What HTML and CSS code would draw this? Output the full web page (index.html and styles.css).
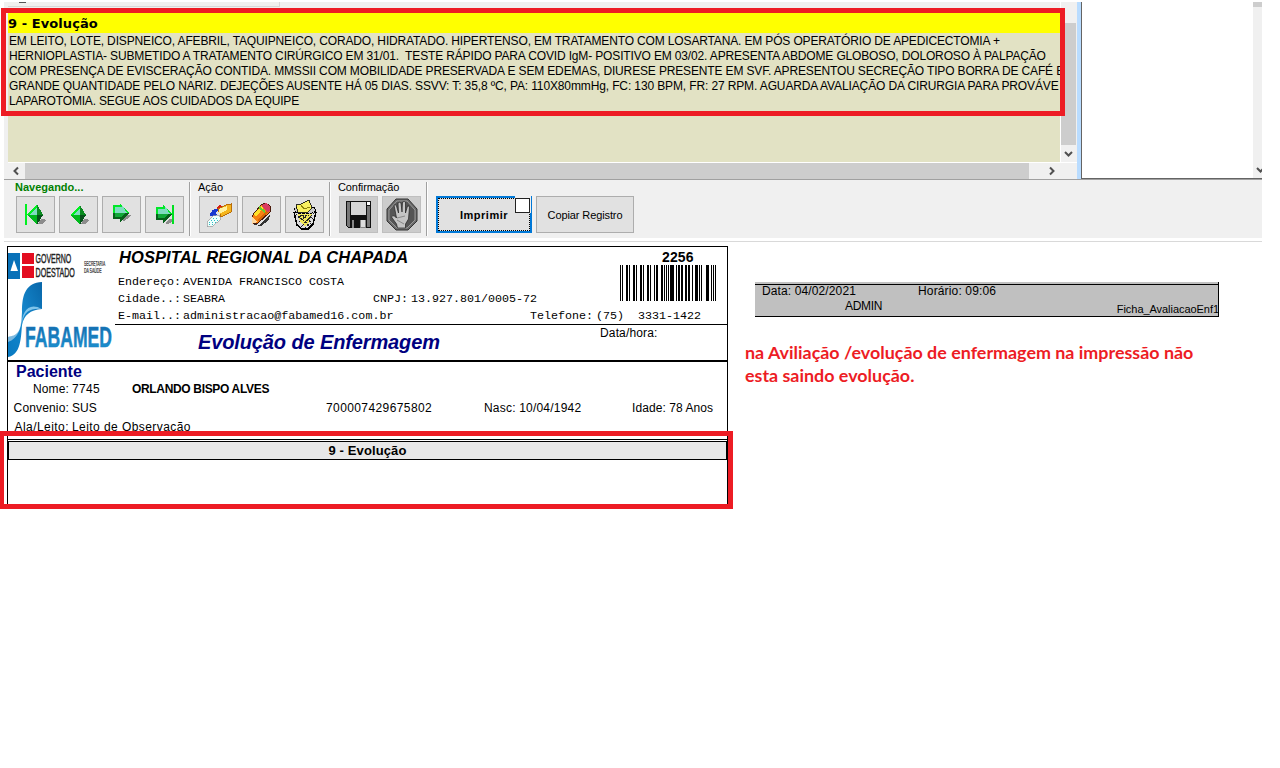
FILE: index.html
```html
<!DOCTYPE html>
<html lang="pt-BR">
<head>
<meta charset="utf-8">
<title>Evolução de Enfermagem</title>
<link rel="stylesheet" href="styles.css">
</head>
<body>
<div class="app">
  <div class="top">
    <div class="pane">
      <div class="view">
        <div class="content">
          <div class="strip"><i></i></div>
          <h1 class="heading">9 - Evolução</h1>
          <div class="note">
            <p class="n1">EM LEITO, LOTE, DISPNEICO, AFEBRIL, TAQUIPNEICO, CORADO, HIDRATADO. HIPERTENSO, EM TRATAMENTO COM LOSARTANA. EM PÓS OPERATÓRIO DE APEDICECTOMIA +</p>
            <p class="n2">HERNIOPLASTIA- SUBMETIDO A TRATAMENTO CIRÚRGICO EM 31/01.&nbsp; TESTE RÁPIDO PARA COVID IgM- POSITIVO EM 03/02. APRESENTA ABDOME GLOBOSO, DOLOROSO À PALPAÇÃO</p>
            <p class="n3">COM PRESENÇA DE EVISCERAÇÃO CONTIDA. MMSSII COM MOBILIDADE PRESERVADA E SEM EDEMAS, DIURESE PRESENTE EM SVF. APRESENTOU SECREÇÃO TIPO BORRA DE CAFÉ E</p>
            <p class="n4">GRANDE QUANTIDADE PELO NARIZ. DEJEÇÕES AUSENTE HÁ 05 DIAS. SSVV: T: 35,8 ºC, PA: 110X80mmHg, FC: 130 BPM, FR: 27 RPM. AGUARDA AVALIAÇÃO DA CIRURGIA PARA PROVÁVE</p>
            <p class="n5">LAPAROTOMIA. SEGUE AOS CUIDADOS DA EQUIPE</p>
          </div>
        </div>
        <div class="vscroll"><div class="vthumb"></div><svg width="15" height="17"><path d="M4 7l3.500 3.500L11 7" class="chev"/></svg></div>
      </div>
      <div class="hscroll"><svg width="17" height="16"><path d="M10 4.500L6.500 8L10 11.500" class="chev"/></svg><div class="hthumb"></div><svg class="hright" width="17" height="16"><path d="M5 4.500L8.500 8L5 11.500" class="chev"/></svg></div>
    </div>
    <div class="side"><div class="sidescroll"><i></i><svg width="9" height="17"><path d="M4 7l3.500 3.500L11 7" class="chev"/></svg></div></div>
  </div>

  <div class="toolbar">
    <section class="group nav">
      <span class="label navlabel">Navegando...</span>
      <div class="buttons">
        <button class="btn"><svg viewBox="0 0 39 38"><path d="M22 28l3-5h4l1 2-4 3z" fill="#8c8c8c"/><path d="M9 8h2v21H9z" fill="#00f020"/><path d="M11 19L21 8v11z" fill="#00f020"/><path d="M14 19L21 11v8z" fill="#7fdcc0"/><path d="M21 8l6 11h-6z" fill="#0a8a20"/><path d="M11 19h10v10z" fill="#00b81c"/><path d="M21 19h6l-6 10z" fill="#06521a"/></svg></button>
        <button class="btn"><svg viewBox="0 0 39 38"><path d="M22 28l3-5h4l1 2-4 3z" fill="#8c8c8c"/><path d="M11 19L21 9v10z" fill="#00f020"/><path d="M14 19L21 12v7z" fill="#7fdcc0"/><path d="M21 9l6 10h-6z" fill="#0a8a20"/><path d="M11 19h10v10z" fill="#00b81c"/><path d="M21 19h6l-6 10z" fill="#06521a"/></svg></button>
        <button class="btn"><svg viewBox="0 0 39 38"><path d="M20 24l5-5h5l-5 4-3 2z" fill="#8c8c8c"/><path d="M11 9h7V7l9 10H11z" fill="#00e828"/><path d="M13 11h7v-2l5 8H13z" fill="#7fdcc0"/><path d="M11 17h16l-9 9v-3h-7z" fill="#06601a"/><path d="M13 17h10l-4 4h-6z" fill="#10a838"/></svg></button>
        <button class="btn"><svg viewBox="0 0 39 38"><path d="M20 27l5-4h5l-5 4-3 1z" fill="#8c8c8c"/><path d="M11 11h7V8l9 10H11z" fill="#00e828"/><path d="M13 13h7v-3l5 8H13z" fill="#7fdcc0"/><path d="M11 18h16l-9 10v-4h-7z" fill="#06601a"/><path d="M13 18h10l-4 4h-6z" fill="#10a838"/><path d="M27 9h2v19h-2z" fill="#00e020"/></svg></button>
      </div>
    </section>
    <section class="group act">
      <span class="label">Ação</span>
      <div class="buttons">
        <button class="btn"><svg viewBox="0 0 39 38"><path d="M11 20c0-5 4-8 9-7l-3 3 1 4z" fill="#1838d0"/><path d="M18 11l3-2 2 2-4 3z" fill="#d82010"/><path d="M19 13l8-4 5-1v8l-10 5z" fill="#f5b51c" stroke="#b96d08"/><path d="M20 13l8-3v4l-8 4z" fill="#fff2a0"/><path d="M8 26l6-6 6-1 2 4-8 7-6 1z" fill="#effffd" stroke="#999" stroke-width=".7"/><path d="M10 26h1m2 0h1m2 0h1m-5-2h1m2 0h1m2 0h1m-5-2h1m2 0h1m-8 6h1m2 0h1" stroke="#30bcc4"/></svg></button>
        <button class="btn"><svg viewBox="0 0 39 38"><path d="M10 27l7 2 11-11-1 6-8 6-7-1z" fill="#333"/><path d="M10 20l9-11 5-2 4 3v6L16 27l-6 1z" fill="#f58212" stroke="#4b1b0c"/><path d="M12 18l7-8 3 1-8 10z" fill="#ffe22a"/><path d="M16 24l8-9 2 1-9 10z" fill="#d96504"/><path d="M20 9l4-2 4 3v5l-3 1-4-4z" fill="#d83c61"/><path d="M17 11l6 5" stroke="#65cd30" stroke-width="2"/><path d="M10 21l5 5-5 2z" fill="#ffd8a0"/></svg></button>
        <button class="btn"><svg viewBox="0 0 39 38"><path d="M9 16l3 13 5 4h6l5-5 3-12z" fill="#dcdcdc"/><path d="M13 18h14l-3 9-4 3-5-4z" fill="#f1e75a"/><path d="M11 18l14 12M15 17l12 10M20 17l8 6M29 17L16 31M24 17L13 27M19 17l-7 6M20 32l6-5" stroke="#222" stroke-dasharray="2 1"/><path d="M9 16l3 13 5 4h6l5-5 3-12" fill="none" stroke="#000" stroke-width="1.500"/><ellipse cx="20" cy="14" rx="11" ry="4" fill="#c8c8c8" stroke="#000" stroke-dasharray="3 1"/><path d="M11 9l5-1 8-4 3 8-5 5-9-1z" fill="#f9f060" stroke="#000" stroke-width=".8"/><path d="M16 9l3 4 6-2" stroke="#8b7f08" fill="none"/></svg></button>
      </div>
    </section>
    <section class="group conf">
      <span class="label conflabel">Confirmação</span>
      <div class="buttons">
        <button class="btn off"><svg viewBox="0 0 39 38"><path d="M7 5h25v27H9l-2-2z" fill="#111"/><path d="M8 6h3v25H9l-1-2zM28 10h3v21h-3z" fill="#777"/><path d="M12 6h15v13H12z" fill="#d6d6d6"/><path d="M28 6h3v3h-3z" fill="#fff"/><path d="M13 24h14v8H13z" fill="#888"/><path d="M15 24h6v8h-6z" fill="#111"/><path d="M22 24h4v7h-4z" fill="#ddd"/></svg></button>
        <button class="btn off"><svg viewBox="0 0 39 38" class="smooth"><path d="M14 3h12l9 10v12l-9 9H14l-9-9V13z" fill="#6b6b6b" stroke="#333"/><path d="M15 5h10l8 9v10l-8 8H15l-8-8V14z" fill="#555" stroke="#999"/><path d="M12 9q2-1 2.500 1l2 7-.5-10q1.500-1.500 3 0l1 9 .5-10q2-1 3 0v11l2-7q2-.5 2 1l-1 12-3 5v4h-8l-1-4-5-7q1-2 3-1l2 2z" fill="#c4c4c4" stroke="#222" stroke-width=".7"/><path d="M15 22l8-2M15 24l7 4" stroke="#888"/></svg></button>
      </div>
    </section>
    <button class="cmd print">Imprimir<span class="check"></span></button>
    <button class="cmd copy">Copiar Registro</button>
  </div>
</div>

<main class="main">
  <article class="report">
    <header class="rhead">
      <svg class="logo" width="107" height="113" viewBox="8 247 107 113">
        <defs><linearGradient id="sw" x1="0" x2="1" y1="1" y2="0"><stop offset="0" stop-color="#0879c1"/><stop offset=".5" stop-color="#1588cd"/><stop offset="1" stop-color="#0866a9"/></linearGradient><linearGradient id="fm" x1="0" x2="0" y1="0" y2="1"><stop offset="0" stop-color="#1266a8"/><stop offset="1" stop-color="#1e96d4"/></linearGradient></defs>
        <path d="M8 253h12v26H8z" fill="#0871b8"/><path d="M10.500 271L14 260l4 11z" fill="#fff"/>
        <path d="M22 253h12v11H22zM22 266h12v12H22z" fill="#e30d20"/>
        <g font-family="Liberation Sans" fill="#222" stroke="#222" stroke-width=".4"><text transform="translate(35.500 263.300) scale(.56 1)" font-size="12.500">GOVERNO</text><text transform="translate(35.500 277.300) scale(.57 1)" font-size="12.500">DOESTADO</text></g>
        <g font-family="Liberation Sans" fill="#222" stroke="#222" stroke-width=".2"><text transform="translate(84 266) scale(.48 1)" font-size="7">SECRETARIA</text><text transform="translate(84 273) scale(.5 1)" font-size="7">DA SAÚDE</text></g>
        <path d="M42 282v27c-12 1-18 6-20 16-1 12-1 30-14 32v-20c12-2 13-8 14-25 0-18 4-29 20-30z" fill="url(#sw)"/>
        <path d="M42 309c-11-1-18 2-20 14 0-10 6-22 20-14z" fill="#7fc4ea"/><path d="M8 337c9-2 13-8 14-25 1 14-4 27-14 30z" fill="#fff" opacity=".45"/>
        <text x="25" y="346.500" font-family="Liberation Sans" font-weight="bold" font-size="29" fill="url(#fm)" stroke="#1a7dc0" stroke-width=".5" textLength="87" lengthAdjust="spacingAndGlyphs">FABAMED</text>
      </svg>
      <div class="rinfo">
        <div class="rtop">
          <div class="addr">
            <h2>HOSPITAL REGIONAL DA CHAPADA</h2>
            <div class="row mono"><span class="k">Endereço:</span><span>AVENIDA FRANCISCO COSTA</span></div>
            <div class="row mono"><span class="k">Cidade..:</span><span class="city">SEABRA</span><span class="ck">CNPJ:</span><span class="cn">13.927.801/0005-72</span></div>
          </div>
          <div class="code"><b>2256</b>
            <svg width="97" height="36" viewBox="0 0 97 36"><path d="M0 0h1v36H0zM2 0h1v36H2zM6 0h2v36H6zM9 0h1v36H9zM13 0h2v36h-2zM16 0h1v36h-1zM20 0h2v36h-2zM23 0h1v36h-1zM27 0h2v36h-2zM30 0h1v36h-1zM34 0h1v36h-1zM36 0h2v36h-2zM41 0h2v36h-2zM44 0h1v36h-1zM46 0h1v36h-1zM48 0h1v36h-1zM50 0h4v36h-4zM56 0h1v36h-1zM58 0h2v36h-2zM61 0h2v36h-2zM65 0h2v36h-2zM68 0h2v36h-2zM72 0h1v36h-1zM75 0h3v36h-3zM79 0h1v36h-1zM81 0h1v36h-1zM86 0h3v36h-3zM91 0h1v36h-1zM93 0h1v36h-1zM95 0h1v36h-1z"/></svg>
          </div>
        </div>
        <div class="row mono"><span class="k">E-mail..:</span><span class="mail">administracao@fabamed16.com.br</span><span class="tk">Telefone:</span><span class="ddd">(75)</span><span>3331-1422</span></div>
        <div class="rtitle"><h2>Evolução de Enfermagem</h2><span>Data/hora:</span></div>
      </div>
    </header>
    <section class="patient">
      <h3>Paciente</h3>
      <div class="prow r1"><span class="pk">Nome:</span><span class="pv">7745</span><b>ORLANDO BISPO ALVES</b></div>
      <div class="prow r2"><span class="pk">Convenio:</span><span class="conv">SUS</span><span class="card">700007429675802</span><span class="born">Nasc: 10/04/1942</span><span class="age">Idade: 78 Anos</span></div>
      <div class="prow r3"><span class="pk">Ala/Leito:</span><span class="ward">Leito de Observação</span></div>
    </section>
    <div class="section">9 - Evolução</div>
  </article>
  <aside class="right">
    <div class="foot">
      <div class="frow"><span class="fdate">Data: 04/02/2021</span><span class="ftime">Horário: 09:06</span></div>
      <div class="frow2"><span class="admin">ADMIN</span><span class="file">Ficha_AvaliacaoEnf1</span></div>
    </div>
    <p class="remark"><span class="m1">na Aviliação /evolução de enfermagem na impressão não</span><br><span class="m2">esta saindo evolução.</span></p>
  </aside>
</main>
<div class="mark marktop"></div>
<div class="mark markbottom"></div>
</body>
</html>
```
FILE: styles.css
```css
* { box-sizing: border-box; }
body { margin: 0; width: 1280px; height: 768px; overflow: hidden; background: #fff; color: #000; font-family: "Liberation Sans", Arial, sans-serif; font-size: 12px; position: relative; }
h1, h2, h3, p { margin: 0; }
svg { display: block; }
span, b { white-space: pre; }
.app { margin-left: 4px; padding-top: 2px; width: 1258px; }
.top { display: flex; height: 177px; background: #f0f0f0; }
.pane { width: 1073px; padding-left: 4px; }
.view { display: flex; height: 160px; }
.content { width: 1053px; background: #e2e2c4; border-right: 1px solid #fff; overflow: hidden; }
.strip { height: 11px; background: linear-gradient(#555, #555) 11px 0 / 7px 1px no-repeat #f0f0ee; }
.strip i { display: block; width: 272px; height: 5px; border-right: 1px solid #d8d8d8; border-bottom: 1px solid #d8d8d8; }
.heading { height: 20px; background: #ff0; font: bold 13px/21px "DejaVu Sans", Verdana, sans-serif; letter-spacing: 0.08px; }
.note { padding: 1px 0 0 1px; }
.note p { font-size: 12px; line-height: 15px; white-space: nowrap; }
.n1 { letter-spacing: -0.147px; }
.n2 { letter-spacing: -0.15px; }
.n3 { letter-spacing: -0.15px; }
.n4 { letter-spacing: -0.125px; }
.n5 { letter-spacing: -0.17px; }
.chev { fill: none; stroke: #505050; stroke-width: 2; }
.vscroll { width: 15px; display: flex; flex-direction: column; background: #f0f0f0; }
.vthumb { margin-top: 21px; height: 122px; background: #cdcdcd; }
.hscroll { display: flex; height: 17px; border-top: 1px solid #fff; }
.hthumb { width: 1004px; background: #cdcdcd; }
.hright { margin-left: 16px; }
.side { flex: 1; display: flex; justify-content: flex-end; background: #fff; border-left: 4px solid #b9dcff; box-shadow: inset 1px -1px #646464; }
.sidescroll { width: 9px; height: 176px; display: flex; flex-direction: column; justify-content: space-between; background: #f0f0f0; }
.sidescroll i { height: 5px; background: #cdcdcd; }
.toolbar { display: flex; height: 63px; background: linear-gradient(#a0a0a0 1px, #f0f0f0 1px 59px, #fff 59px 60px, #fff 60px 62px, #d9d9d9 62px); }
.group { height: 54px; margin-top: 3px; border-right: 1px solid #a0a0a0; box-shadow: 1px 0 #fff; }
.nav { width: 186px; padding-left: 11px; }
.act { width: 140px; padding-left: 8px; }
.conf { width: 97px; padding-left: 8px; }
.label { display: block; height: 14px; font-size: 11px; line-height: 10px; }
.navlabel { color: #008000; font-weight: bold; }
.conflabel { letter-spacing: -0.1px; }
.buttons { display: flex; gap: 4px; padding-left: 1px; }
.btn { width: 39px; height: 37px; padding: 0; border: 0; background: #e1e1e1; box-shadow: inset 0 0 0 1px #adadad; }
.btn svg { width: 39px; height: 38px; shape-rendering: crispEdges; }
.btn svg.smooth { shape-rendering: auto; }
.off { background: #ccc; box-shadow: inset 0 0 0 1px #bfbfbf; }
.cmd { height: 37px; margin-top: 17px; padding: 0; font: 11px "Liberation Sans", Arial, sans-serif; background: #e1e1e1; border: 1px solid #adadad; }
.print { position: relative; width: 96px; margin-left: 9px; font-weight: bold; letter-spacing: 0.5px; border: 2px solid #0078d7; outline: 1px dotted #000; outline-offset: -3px; }
.check { position: absolute; right: -1px; top: -2px; width: 16px; height: 17px; background: #f0f0f0; }
.check::after { content: ""; position: absolute; left: 0; top: 2px; width: 13px; height: 13px; background: #fff; border: 1px solid #222; }
.copy { width: 98px; margin-left: 4px; letter-spacing: -0.1px; }
.main { display: flex; padding: 4px 0 0 7px; }
.report { width: 721px; height: 261px; border: 1px solid #000; border-bottom: 0; }
.rhead { display: flex; height: 115px; border-bottom: 2px solid #000; }
.logo { width: 107px; height: 113px; }
.rinfo { width: 612px; }
.rtop { display: flex; height: 60px; }
.addr { width: 505px; }
.addr h2 { height: 26px; padding-left: 4px; font: italic bold 16.500px/21px "Liberation Sans", Arial, sans-serif; letter-spacing: 0.08px; }
.row { display: flex; height: 17px; padding-left: 3px; line-height: 19px; }
.mono { font-family: "Liberation Mono", "Courier New", monospace; font-size: 11.670px; }
.k { width: 65px; }
.city { width: 190px; }
.ck { width: 38px; }
.mail { width: 347px; letter-spacing: 0.02px; }
.tk { width: 66px; }
.ddd { width: 42px; }
.code b { display: block; height: 18px; padding-left: 42px; font-size: 14px; line-height: 20px; letter-spacing: 0.15px; }
.rtitle { display: flex; height: 36px; border-top: 1px solid #000; }
.rtitle h2 { width: 485px; padding-left: 83px; font: italic bold 20px/35px "Liberation Sans", Arial, sans-serif; letter-spacing: -0.12px; color: #000080; }
.rtitle span { line-height: 16px; letter-spacing: 0.15px; }
.patient { height: 78px; border-bottom: 1px solid #000; }
.patient h3 { height: 18px; padding-left: 8px; font-size: 16px; line-height: 19px; color: #000080; }
.prow { display: flex; line-height: 19px; height: 19px; }
.pk { width: 64px; text-align: right; padding-right: 3px; letter-spacing: 0.15px; }
.r1 .pv { width: 60px; letter-spacing: 0.3px; }
.r1 b { letter-spacing: -0.33px; }
.r3 .pk { letter-spacing: 0.45px; }
.conv { width: 254px; }
.card { width: 158px; letter-spacing: 0.4px; }
.born { width: 148px; letter-spacing: 0.2px; }
.age { letter-spacing: 0.07px; }
.ward { letter-spacing: 0.43px; }
.section { height: 19px; margin: 1px 0 0 0; border: 1px solid #000; background: #e8e8e8; text-align: center; font-size: 13px; font-weight: bold; line-height: 17px; letter-spacing: 0.12px; }
.right { padding: 36px 0 0 17px; }
.foot { width: 464px; height: 35px; margin-left: 10px; background: #c0c0c0; border-bottom: 1px solid #000; box-shadow: inset -1px 0 #000; }
.frow { display: flex; height: 15px; padding: 2px 0 0 7px; line-height: 14px; background: linear-gradient(transparent 2px, #000 2px 3px, transparent 3px); }
.fdate { width: 156px; letter-spacing: 0.12px; }
.ftime { letter-spacing: 0.15px; }
.frow2 { display: flex; justify-content: space-between; padding-left: 90px; line-height: 18px; }
.admin { letter-spacing: -0.3px; }
.file { font-size: 11px; line-height: 24px; height: 19px; letter-spacing: -0.05px; }
.remark { margin-top: 24px; font: bold 17.900px/23px Lato, Calibri, sans-serif; color: #ed1c24; }
.mark { position: absolute; border: 5px solid #ed1c24; pointer-events: none; }
.marktop { left: 1px; top: 8px; width: 1064px; height: 108px; }
.markbottom { left: -1px; top: 431px; width: 734px; height: 78px; }
```
